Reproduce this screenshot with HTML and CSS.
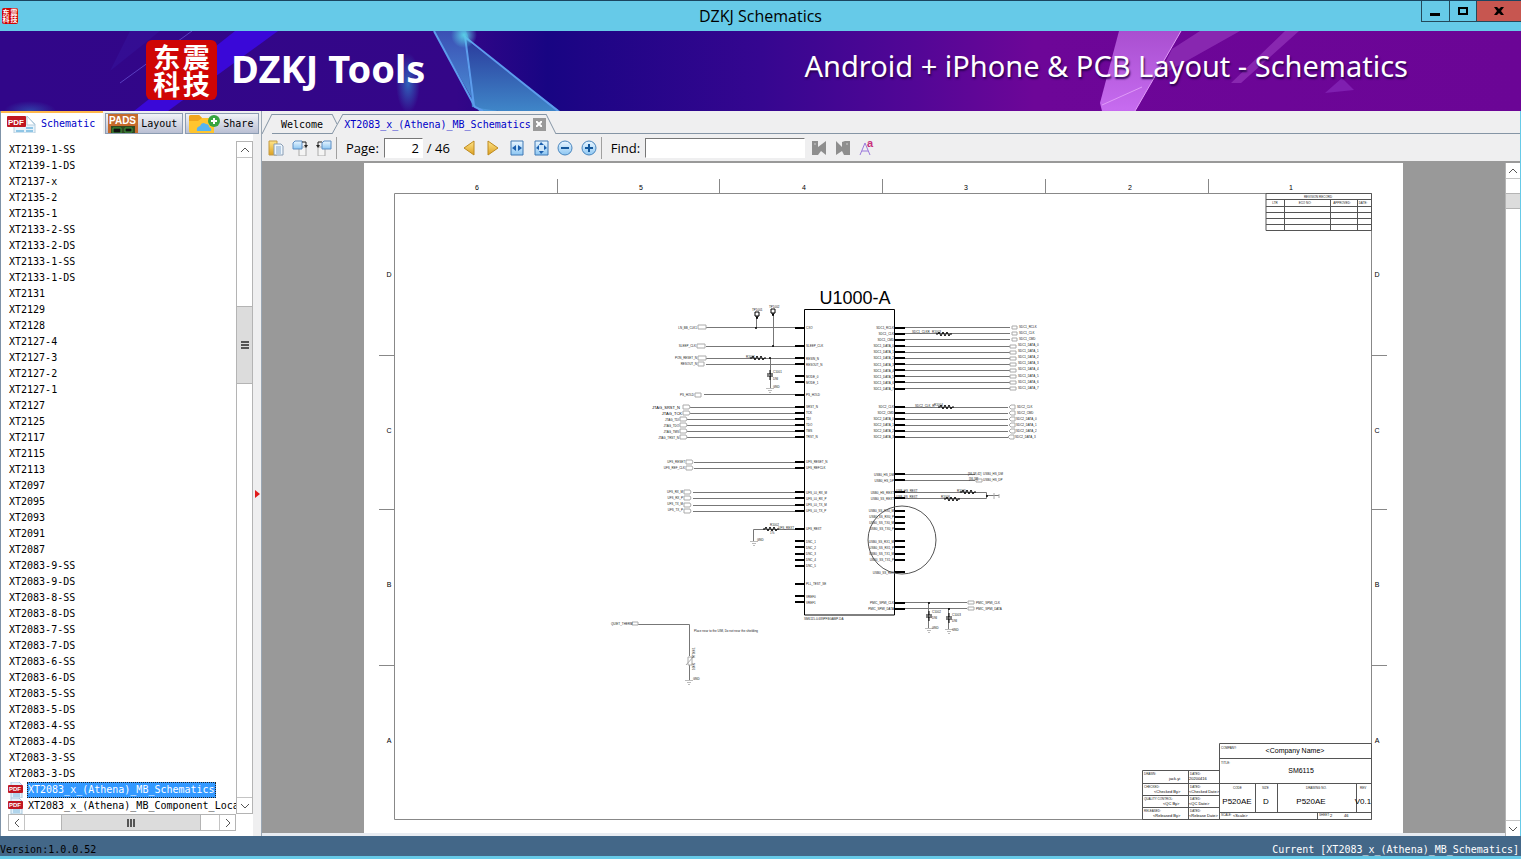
FILE: index.html
```html
<!DOCTYPE html>
<html lang="en">
<head>
    <meta charset="UTF-8">
    <title>DZKJ Schematics</title>
    <meta name="viewport" content="width=device-width, initial-scale=1">
    <link rel="stylesheet" href="styles.css">
</head>
<body>
    <!-- shared icons -->
    <svg class="defs" width="0" height="0" aria-hidden="true">
        <defs>
            <linearGradient id="gold" x1="0" y1="0" x2="0" y2="1">
                <stop offset="0" stop-color="#ffe58a"/><stop offset="1" stop-color="#dca021"/>
            </linearGradient>
            <linearGradient id="sky" x1="0" y1="0" x2="0" y2="1">
                <stop offset="0" stop-color="#eaf6ff"/><stop offset="1" stop-color="#8cc6f2"/>
            </linearGradient>
            <linearGradient id="glassA" x1="0" y1="0" x2="0" y2="1">
                <stop offset="0" stop-color="#3b4fb4"/><stop offset="1" stop-color="#4b96d8"/>
            </linearGradient>
            <linearGradient id="glassB" x1="0" y1="0" x2="0" y2="1">
                <stop offset="0" stop-color="#2a3a9c"/><stop offset="1" stop-color="#3f86c8"/>
            </linearGradient>
            <linearGradient id="pinkA" x1="0" y1="0" x2="0" y2="1">
                <stop offset="0" stop-color="#a94fd0"/><stop offset="1" stop-color="#c76cf0"/>
            </linearGradient>
            <radialGradient id="glow">
                <stop offset="0" stop-color="#5ad0e8"/><stop offset="1" stop-color="#5ad0e8" stop-opacity="0"/>
            </radialGradient>
            <radialGradient id="glowBlue">
                <stop offset="0" stop-color="#2f7cc8"/><stop offset="1" stop-color="#2f7cc8" stop-opacity="0"/>
            </radialGradient>
            <symbol id="pdf" viewBox="0 0 16 16">
                <path d="M3 0h8l3 3v13H3z" fill="#e3f1fb" stroke="#a9c8dd"/>
                <path d="M5 12h7M5 14h7" stroke="#7fb9dd"/>
                <rect x="0" y="3" width="15" height="8" rx="1" fill="#c01722"/>
                <text x="1" y="9" font-size="6" font-weight="bold" fill="#fff">PDF</text>
            </symbol>
            <symbol id="resistor" viewBox="0 0 16 4" overflow="visible">
                <path d="M0 2h2l1-2 2 4 2-4 2 4 2-4 2 4 1-2h2" fill="none" stroke="#000"/>
            </symbol>
            <symbol id="cap" viewBox="0 0 8 10" overflow="visible">
                <path d="M4 0v4M4 6v4" stroke="#000" stroke-width="1"/>
                <path d="M1 4h6M1 6h6" stroke="#000" stroke-width="1"/>
            </symbol>
            <symbol id="gnd" viewBox="0 0 8 6" overflow="visible">
                <path d="M0 .5h8M2 2.500h4M3 4.500h2" stroke="#bbb" stroke-width="1"/>
            </symbol>
        </defs>
    </svg>

    <div class="window">
        <header class="titlebar">
            <div class="app-icon"><span>东</span><span>震</span><span>科</span><span>技</span></div>
            <h1>DZKJ Schematics</h1>
            <div class="win-buttons">
                <button class="win-btn" aria-label="Minimize"><svg width="10" height="10"><path d="M0 7h10v3H0z"/></svg></button>
                <button class="win-btn" aria-label="Maximize"><svg width="10" height="10"><path d="M1 2h8v6H1z" fill="none" stroke="#000" stroke-width="2"/></svg></button>
                <button class="win-btn close" aria-label="Close"><svg width="10" height="10"><path d="M0 1h3l2 2 2-2h3L7 5l3 4H7L5 7 3 9H0l3-4z"/></svg></button>
            </div>
        </header>

        <div class="banner">
            <svg class="banner-art" viewBox="0 0 1521 80" preserveAspectRatio="none" aria-hidden="true">
                <path d="M235 0h43L168 80h-34z" fill="#3a08d8"/>
                <path d="M130 0h30L110 40z" fill="#35129a" opacity=".6"/>
                <path d="M192 0L120 52" stroke="#5a3fc0"/>
                <ellipse cx="408" cy="52" rx="12" ry="30" fill="url(#glowBlue)" opacity=".8"/>
                <ellipse cx="30" cy="80" rx="26" ry="10" fill="url(#glowBlue)" opacity=".5"/>
                <path d="M434 0h32l31 80h-18z" fill="url(#glassA)"/>
                <path d="M465 8L560 80h-62l-26-4z" fill="url(#glassB)"/>
                <path d="M434 0l41 76 8 4M465 5l9 70M465 6l93 74" fill="none" stroke="#5c9cec" stroke-width="2"/>
                <circle cx="464" cy="4" r="13" fill="url(#glow)"/>
                <path d="M1119 0h62l-46 80h-33l-2-8z" fill="url(#pinkA)"/>
                <path d="M1181 0l-46 80M1102 74l40-18" stroke="#e09af8"/>
                <path d="M1200 0h40l-82 46 14-28zM1285 0h14l-58 52h-10z" fill="#9233b8" opacity=".75"/>
                <path d="M1325 62l17-15 12 12z" fill="#7f1fb0"/>
            </svg>
            <div class="logo"><span>东</span><span>震</span><span>科</span><span>技</span></div>
            <h2 class="brand">DZKJ Tools</h2>
            <p class="tagline">Android + iPhone &amp; PCB Layout - Schematics</p>
        </div>

        <div class="main">
            <aside class="sidebar">
                <nav class="side-tabs">
                    <button class="side-tab active">
                        <svg width="30" height="19" viewBox="0 0 30 19">
                            <path d="M7 3h14l7 7v9H7z" fill="#e8f3fb" stroke="#b5cede"/><path d="M20 2l8 9h-8z" fill="#fff" stroke="#b5cede"/>
                            <path d="M19 14h7M19 17h7M9 17h8" stroke="#8fc6e6" stroke-width="2"/>
                            <rect x="0" y="2" width="19" height="11" rx="1" fill="#c01722"/>
                            <text x="1" y="11" font-size="8" font-weight="bold" fill="#fff">PDF</text>
                        </svg>
                        Schematic
                    </button>
                    <button class="side-tab">
                        <svg width="30" height="19" viewBox="0 0 30 19">
                            <rect x="0" y="0" width="30" height="19" fill="#c56a2c"/><rect x="3" y="12" width="24" height="7" fill="#2f4a22"/>
                            <text x="1" y="10" font-size="10" font-weight="bold" fill="#fff">PADS</text>
                            <path d="M5 14h8v5H5zM17 14h7v4h-7z" fill="#111" stroke="#3f9a3c"/>
                        </svg>
                        Layout
                    </button>
                    <button class="side-tab">
                        <svg width="32" height="19" viewBox="0 0 32 19">
                            <path d="M1 3q0-2 2-2h8l3 3h10q2 0 2 2v13H3q-2 0-2-2z" fill="#ffc52e"/><path d="M1 3q0-2 2-2h8l3 3-4 3H1z" fill="#f0a51c"/>
                            <path d="M9 17q-1-4 3-5 2-5 6-2 3 0 3 3 3 1 2 4z" fill="#56b4f0"/>
                            <circle cx="26" cy="7" r="6" fill="#37a540"/><path d="M26 4v6M23 7h6" stroke="#fff" stroke-width="2"/>
                        </svg>
                        Share
                    </button>
                </nav>
                <div class="side-body">
                    <div class="tree-pane">
                        <ul class="tree">
                            <li>XT2139-1-SS</li>
                            <li>XT2139-1-DS</li>
                            <li>XT2137-x</li>
                            <li>XT2135-2</li>
                            <li>XT2135-1</li>
                            <li>XT2133-2-SS</li>
                            <li>XT2133-2-DS</li>
                            <li>XT2133-1-SS</li>
                            <li>XT2133-1-DS</li>
                            <li>XT2131</li>
                            <li>XT2129</li>
                            <li>XT2128</li>
                            <li>XT2127-4</li>
                            <li>XT2127-3</li>
                            <li>XT2127-2</li>
                            <li>XT2127-1</li>
                            <li>XT2127</li>
                            <li>XT2125</li>
                            <li>XT2117</li>
                            <li>XT2115</li>
                            <li>XT2113</li>
                            <li>XT2097</li>
                            <li>XT2095</li>
                            <li>XT2093</li>
                            <li>XT2091</li>
                            <li>XT2087</li>
                            <li>XT2083-9-SS</li>
                            <li>XT2083-9-DS</li>
                            <li>XT2083-8-SS</li>
                            <li>XT2083-8-DS</li>
                            <li>XT2083-7-SS</li>
                            <li>XT2083-7-DS</li>
                            <li>XT2083-6-SS</li>
                            <li>XT2083-6-DS</li>
                            <li>XT2083-5-SS</li>
                            <li>XT2083-5-DS</li>
                            <li>XT2083-4-SS</li>
                            <li>XT2083-4-DS</li>
                            <li>XT2083-3-SS</li>
                            <li>XT2083-3-DS</li>
                            <li class="file"><svg width="16" height="16"><use href="#pdf"/></svg><span class="selected">XT2083_x_(Athena)_MB_Schematics</span></li>
                            <li class="file"><svg width="16" height="16"><use href="#pdf"/></svg><span>XT2083_x_(Athena)_MB_Component_Location</span></li>
                        </ul>
                        <div class="scroll-v">
                            <button aria-label="Scroll up"><svg width="8" height="6"><path d="M0 5l4-4 4 4"/></svg></button>
                            <div class="track">
                                <div class="before"></div>
                                <div class="thumb"><svg width="8" height="8"><path d="M0 1h8M0 4h8M0 7h8"/></svg></div>
                                <div class="after"></div>
                            </div>
                            <button aria-label="Scroll down"><svg width="8" height="6"><path d="M0 1l4 4 4-4"/></svg></button>
                        </div>
                        <div class="scroll-h">
                            <button aria-label="Scroll left"><svg width="6" height="8"><path d="M5 0L1 4l4 4"/></svg></button>
                            <div class="track">
                                <div class="before"></div>
                                <div class="thumb"><svg width="8" height="8"><path d="M1 0v8M4 0v8M7 0v8"/></svg></div>
                                <div class="after"></div>
                            </div>
                            <button aria-label="Scroll right"><svg width="6" height="8"><path d="M1 0l4 4-4 4"/></svg></button>
                        </div>
                    </div>
                    <div class="splitter"><svg width="5" height="8"><path d="M0 0l5 4-5 4z" fill="#e01b1b"/></svg></div>
                </div>
            </aside>

            <section class="viewer">
                <nav class="doc-tabs">
                    <svg class="edge" width="10" height="20"><path d="M0 20L10 0"/></svg>
                    <button class="doc-tab">Welcome</button>
                    <svg class="edge" width="11" height="20"><path d="M0 0l5 10M0 20L11 0"/></svg>
                    <button class="doc-tab active">XT2083_x_(Athena)_MB_Schematics
                        <span class="tab-close"><svg width="6" height="6"><path d="M0 0l6 6M6 0L0 6" stroke="#fff" stroke-width="2"/></svg></span>
                    </button>
                    <svg class="edge" width="10" height="20"><path d="M0 0l10 20"/></svg>
                    <span class="tab-line"></span>
                </nav>

                <div class="toolbar">
                    <button class="tool" aria-label="Pages">
                        <svg width="16" height="16"><path d="M1 1h8v14H1z" fill="url(#gold)" stroke="#c39a45"/><path d="M6 4h7l2 2v9H6z" fill="#eef6fd" stroke="#8a9eb4"/><path d="M8 7h5M8 9h5M8 11h5M8 13h5" stroke="#7fa3c9"/></svg>
                    </button>
                    <button class="tool" aria-label="Rotate right">
                        <svg width="16" height="16"><path d="M7 7h7v9H7z" fill="#f4f4f4" stroke="#aaa"/><path d="M3 1h7v8H1V3z" fill="url(#sky)" stroke="#5f8fc4"/><path d="M10 2h4v4" fill="none" stroke="#222"/><path d="M12 5h4l-2 3z" fill="#222"/></svg>
                    </button>
                    <button class="tool" aria-label="Rotate left">
                        <svg width="16" height="16"><path d="M2 7h7v9H2z" fill="#f4f4f4" stroke="#aaa"/><path d="M8 1h7v8H6V3z" fill="url(#sky)" stroke="#5f8fc4"/><path d="M6 2H2v4" fill="none" stroke="#222"/><path d="M0 5h4L2 8z" fill="#222"/></svg>
                    </button>
                    <span class="sep"></span>
                    <label for="page">Page:</label>
                    <input class="page-input" type="text" id="page" value="2">
                    <span class="total">/ 46</span>
                    <button class="tool" aria-label="Previous page">
                        <svg width="16" height="16"><path d="M13 1v14L3 8z" fill="url(#gold)" stroke="#bd8a20"/></svg>
                    </button>
                    <button class="tool" aria-label="Next page">
                        <svg width="16" height="16"><path d="M3 1v14l10-7z" fill="url(#gold)" stroke="#bd8a20"/></svg>
                    </button>
                    <button class="tool" aria-label="Fit width">
                        <svg width="16" height="16"><path d="M2 1h12v14H2z" fill="url(#sky)" stroke="#3f78b4"/><path d="M7 5v6L3 8zM9 5v6l4-3z" fill="#1b5fae"/></svg>
                    </button>
                    <button class="tool" aria-label="Fit page">
                        <svg width="16" height="16"><path d="M2 1h13v14H2z" fill="url(#sky)" stroke="#3f78b4"/><path d="M8 2l3 3H6zM8 14l3-3H6zM3 8l3-3v5zM14 8l-3-3v5z" fill="#1b5fae"/><path d="M6 5h5v6H6z" fill="#cfe6f8"/></svg>
                    </button>
                    <button class="tool" aria-label="Zoom out">
                        <svg width="16" height="16"><circle cx="8" cy="8" r="7" fill="url(#sky)" stroke="#4a86be"/><path d="M4 8h8" stroke="#14589c" stroke-width="2"/></svg>
                    </button>
                    <button class="tool" aria-label="Zoom in">
                        <svg width="16" height="16"><circle cx="8" cy="8" r="7" fill="url(#sky)" stroke="#4a86be"/><path d="M4 8h8M8 4v8" stroke="#14589c" stroke-width="2"/></svg>
                    </button>
                    <span class="sep"></span>
                    <label for="find">Find:</label>
                    <input class="find-input" type="text" id="find">
                    <button class="tool" aria-label="Find previous">
                        <svg width="16" height="16"><path d="M1 1h6v6l8-6v14l-5-4-3 4H1z" fill="#8e8e8e"/><path d="M3 4h2" stroke="#ccc"/></svg>
                    </button>
                    <button class="tool" aria-label="Find next">
                        <svg width="16" height="16"><path d="M1 1l6 6V2l3-1h5v14H9l-2-4-6 4z" fill="#8e8e8e"/><path d="M11 4h2" stroke="#ccc"/></svg>
                    </button>
                    <button class="tool" aria-label="Match case">
                        <svg width="20" height="20"><path d="M3 17L8 5l5 12M5 13h6" fill="none" stroke="#9a78dc"/><text x="10" y="9" font-size="11" font-weight="bold" fill="#c8307c">a</text></svg>
                    </button>
                </div>

                <div class="canvas">
                    <div class="page-area">
                        <svg class="page" viewBox="364 163 1039 670" role="img" aria-label="U1000-A schematic">
                            <!-- sheet frame -->
                            <g class="thin">
                                <path d="M394.500 193.500H1371.500V819.500H394.500z"/>
                                <path d="M557.500 179V193M719.500 179V193M882.500 179V193M1045.500 179V193M1208.500 179V193"/>
                                <path d="M379 355.500H394M379 509.500H394M379 665.500H394M1372 355.500H1387M1372 509.500H1387M1372 665.500H1387"/>
                            </g>
                            <g class="grid-label">
                                <text x="477" y="190">6</text><text x="641" y="190">5</text><text x="804" y="190">4</text>
                                <text x="966" y="190">3</text><text x="1130" y="190">2</text><text x="1291" y="190">1</text>
                                <text x="389" y="277">D</text><text x="389" y="433">C</text><text x="389" y="587">B</text><text x="389" y="743">A</text>
                                <text x="1377" y="277">D</text><text x="1377" y="433">C</text><text x="1377" y="587">B</text><text x="1377" y="743">A</text>
                            </g>

                            <!-- revision table -->
                            <path class="dark" d="M1266 193.500H1371.500V230.500H1266zM1266 199.500H1371M1266 206.500H1371M1266 212.500H1371M1266 218.500H1371M1266 224.500H1371M1284.500 200V230M1330.500 200V230M1357.500 200V230"/>
                            <g class="tiny mid">
                                <text x="1318" y="198">REVISION RECORD</text><text x="1275" y="204">LTR</text><text x="1305" y="204">ECO NO:</text><text x="1342" y="204">APPROVED:</text><text x="1363" y="204">DATE:</text>
                            </g>

                            <!-- chip -->
                            <path class="chip" d="M804.500 309.500H894.500V615H804.500z"/>
                            <text class="chip-name" x="855" y="304">U1000-A</text>
                            <text class="tiny" x="804" y="620">SM6115-0-689PFBGAMP-DA</text>
                            <path class="pin" d="M795 328h9M795 346h9M795 358h9M795 364h9M795 376h9M795 382h9M795 395h9M795 407h9M795 413h9M795 419h9M795 425h9M795 431h9M795 437h9M795 462h9M795 468h9M795 492h9M795 498h9M795 505h9M795 511h9M795 529h9M795 541h9M795 547h9M795 554h9M795 560h9M795 566h9M795 584h9M795 596h9M795 602h9"/>
                            <path class="pin" d="M895 328h10M895 334h10M895 340h10M895 346h10M895 352h10M895 358h10M895 364h10M895 370h10M895 376h10M895 382h10M895 389h10M895 407h10M895 413h10M895 419h10M895 425h10M895 431h10M895 437h10M895 474h10M895 480h10M895 492h10M895 498h10M895 511h10M895 517h10M895 523h10M895 529h10M895 541h10M895 547h10M895 554h10M895 560h10M895 572h10M895 603h10M895 609h10"/>
                            <g class="tiny">
                                <text x="806" y="329">CXO</text><text x="806" y="347">SLEEP_CLK</text><text x="806" y="360">RESIN_N</text><text x="806" y="366">RESOUT_N</text>
                                <text x="806" y="378">MODE_0</text><text x="806" y="384">MODE_1</text><text x="806" y="396">PS_HOLD</text><text x="806" y="408">SRST_N</text>
                                <text x="806" y="414">TCK</text><text x="806" y="420">TDI</text><text x="806" y="426">TDO</text><text x="806" y="432">TMS</text><text x="806" y="438">TRST_N</text>
                                <text x="806" y="463">UFS_RESET_N</text><text x="806" y="469">UFS_REFCLK</text><text x="806" y="494">UFS_L0_RX_M</text><text x="806" y="500">UFS_L0_RX_P</text>
                                <text x="806" y="506">UFS_L0_TX_M</text><text x="806" y="512">UFS_L0_TX_P</text><text x="806" y="530">UFS_REXT</text><text x="806" y="543">DNC_1</text>
                                <text x="806" y="549">DNC_2</text><text x="806" y="555">DNC_3</text><text x="806" y="561">DNC_4</text><text x="806" y="567">DNC_5</text>
                                <text x="806" y="585">PLL_TEST_SE</text><text x="806" y="598">VREF0</text><text x="806" y="604">VREF1</text>
                            </g>
                            <g class="tiny end">
                                <text x="894" y="329">SDC1_RCLK</text><text x="894" y="335">SDC1_CLK</text><text x="894" y="341">SDC1_CMD</text><text x="894" y="347">SDC1_DATA_0</text>
                                <text x="894" y="353">SDC1_DATA_1</text><text x="894" y="359">SDC1_DATA_2</text><text x="894" y="366">SDC1_DATA_3</text><text x="894" y="372">SDC1_DATA_4</text>
                                <text x="894" y="378">SDC1_DATA_5</text><text x="894" y="384">SDC1_DATA_6</text><text x="894" y="390">SDC1_DATA_7</text><text x="894" y="408">SDC2_CLK</text>
                                <text x="894" y="414">SDC2_CMD</text><text x="894" y="420">SDC2_DATA_0</text><text x="894" y="426">SDC2_DATA_1</text><text x="894" y="432">SDC2_DATA_2</text>
                                <text x="894" y="438">SDC2_DATA_3</text><text x="894" y="476">USB0_HS_DM</text><text x="894" y="482">USB0_HS_DP</text><text x="894" y="494">USB0_HS_REXT</text>
                                <text x="894" y="500">USB0_SS_REXT</text><text x="894" y="512">USB0_SS_RX0_M</text><text x="894" y="518">USB0_SS_RX0_P</text><text x="894" y="524">USB0_SS_TX0_M</text>
                                <text x="894" y="530">USB0_SS_TX0_P</text><text x="894" y="543">USB0_SS_RX1_M</text><text x="894" y="549">USB0_SS_RX1_P</text><text x="894" y="555">USB0_SS_TX1_M</text>
                                <text x="894" y="561">USB0_SS_TX1_P</text><text x="894" y="574">USB0_SS_REF</text><text x="894" y="604">PMIC_SPMI_CLK</text><text x="894" y="610">PMIC_SPMI_DATA</text>
                            </g>

                            <!-- left nets -->
                            <path class="wire" d="M706 327.500H795M706 346.500H795M706 358.500H795M706 364.500H795M704 394.500H795M690 407.500H795M690 413.500H795M687 419.500H795M687 425.500H795M687 431.500H795M687 437.500H795M694 462.500H795M694 468.500H795M693 492.500H795M693 498.500H795M693 505.500H795M693 511.500H795"/>
                            <path class="wire" d="M756.500 318V328M773.500 315V346M770.500 358V388M753.500 541V529.500H795"/>
                            <path class="port" d="M698 325h8v4h-8zM697 344h8v4h-8zM698 356h8v4h-8zM698 362h6v4h-6zM695 393h6v4h-6zM683 405h6l1 2-1 2h-6zM683 411h6l1 2-1 2h-6zM680 417h6l1 2-1 2h-6zM680 423h6l1 2-1 2h-6zM680 429h6l1 2-1 2h-6zM680 435h6l1 2-1 2h-6zM686 460h6l1 2-1 2h-6zM686 466h6l1 2-1 2h-6zM684 490h6l1 2-1 2h-6zM684 496h6l1 2-1 2h-6zM684 503h6l1 2-1 2h-6zM684 509h6l1 2-1 2h-6z"/>
                            <path d="M755 312h4v4h-4zM756 316l1 3 1-3M771 309h4v4h-4zM772 313l1 3 1-3" fill="#fff" stroke="#000"/>
                            <circle cx="756" cy="328" r="1"/><circle cx="773" cy="346" r="1"/><circle cx="770" cy="358" r="1"/>
                            <use href="#resistor" x="750" y="356" width="16" height="4"/>
                            <use href="#resistor" x="763" y="527" width="16" height="4"/>
                            <use href="#cap" x="766" y="370" width="8" height="10"/>
                            <use href="#gnd" x="766" y="388" width="8" height="6"/>
                            <use href="#gnd" x="750" y="541" width="8" height="6"/>
                            <g class="tiny end">
                                <text x="697" y="329">LN_BB_CLK1</text><text x="696" y="347">SLEEP_CLK</text><text x="697" y="359">PON_RESET_N</text><text x="697" y="365">RESOUT_N</text><text x="694" y="396">PS_HOLD</text>
                                <text x="679" y="421">JTAG_TDI</text><text x="679" y="427">JTAG_TDO</text><text x="679" y="433">JTAG_TMS</text><text x="679" y="439">JTAG_TRST_N</text>
                                <text x="685" y="463">UFS_RESET</text><text x="685" y="469">UFS_REF_CLK</text><text x="683" y="493">UFS_RX_M</text><text x="683" y="499">UFS_RX_P</text><text x="683" y="505">UFS_TX_M</text><text x="683" y="511">UFS_TX_P</text>
                                <text x="794" y="529">UFS_REXT</text>
                            </g>
                            <g class="small end"><text x="680" y="409">JTAG_SRST_N</text><text x="682" y="415">JTAG_TCK</text></g>
                            <g class="tiny">
                                <text x="752" y="311">TP1001</text><text x="769" y="308">TP1002</text><text x="746" y="358">R1001</text><text x="773" y="373">C1001</text><text x="773" y="380">DNI</text><text x="773" y="388">GND</text>
                                <text x="770" y="526">R1002</text><text x="770" y="534">1%</text><text x="757" y="541">GND</text>
                            </g>

                            <!-- right nets -->
                            <path class="wire" d="M905 327.500H1010M905 333.500H1010M905 339.500H1010M905 346.500H1010M905 352.500H1010M905 358.500H1010M905 364.500H1010M905 370.500H1010M905 376.500H1010M905 382.500H1010M905 388.500H1010M905 407.500H1008M905 413.500H1008M905 419.500H1008M905 425.500H1008M905 431.500H1008M905 437.500H1008"/>
                            <path class="wire" d="M905 474.500H975M905 480.500H975M905 492.500H986.500V498.500H905M986 495.500H999M905 602.500H967M905 608.500H967M928.500 603V628M948.500 609V629"/>
                            <path class="port" d="M1012 326h5v3h-5zM1012 332h5v3h-5zM1012 338h5v3h-5zM1010 345h6v3h-6zM1010 351h6v3h-6zM1010 357h6v3h-6zM1010 363h6v3h-6zM1010 369h6v3h-6zM1010 375h6v3h-6zM1010 381h6v3h-6zM1010 387h6v3h-6zM1009 407l2-2h4v4h-4zM1009 413l2-2h4v4h-4zM1009 419l2-2h4v4h-4zM1009 425l2-2h4v4h-4zM1009 431l2-2h4v4h-4zM1008 437l2-2h4v4h-4zM976 479h6v3h-6zM968 601h6v3h-6zM968 607h6v3h-6zM994 493v6M999 494v4"/>
                            <use href="#resistor" x="936" y="332" width="16" height="4"/>
                            <use href="#resistor" x="938" y="405" width="16" height="4"/>
                            <use href="#resistor" x="960" y="490" width="16" height="4"/>
                            <use href="#resistor" x="944" y="497" width="16" height="4"/>
                            <use href="#cap" x="925" y="611" width="8" height="10"/>
                            <use href="#cap" x="945" y="613" width="8" height="10"/>
                            <use href="#gnd" x="925" y="628" width="8" height="6"/>
                            <use href="#gnd" x="945" y="629" width="8" height="6"/>
                            <circle cx="929" cy="603" r="1"/><circle cx="949" cy="609" r="1"/><circle cx="987" cy="496" r="1"/>
                            <circle class="dark" cx="902" cy="540" r="34"/>
                            <g class="tiny">
                                <text x="1019" y="328">SDC1_RCLK</text><text x="1019" y="334">SDC1_CLK</text><text x="1019" y="340">SDC1_CMD</text><text x="1018" y="346">SDC1_DATA_0</text>
                                <text x="1018" y="352">SDC1_DATA_1</text><text x="1018" y="358">SDC1_DATA_2</text><text x="1018" y="364">SDC1_DATA_3</text><text x="1018" y="370">SDC1_DATA_4</text>
                                <text x="1018" y="377">SDC1_DATA_5</text><text x="1018" y="383">SDC1_DATA_6</text><text x="1018" y="389">SDC1_DATA_7</text><text x="1017" y="408">SDC2_CLK</text>
                                <text x="1017" y="414">SDC2_CMD</text><text x="1016" y="420">SDC2_DATA_0</text><text x="1016" y="426">SDC2_DATA_1</text><text x="1016" y="432">SDC2_DATA_2</text>
                                <text x="1015" y="438">SDC2_DATA_3</text><text x="983" y="475">USB0_HS_DM</text><text x="983" y="481">USB0_HS_DP</text><text x="976" y="604">PMIC_SPMI_CLK</text>
                                <text x="976" y="610">PMIC_SPMI_DATA</text><text x="912" y="333">SDC1_CLKR</text><text x="932" y="333">R1003</text><text x="915" y="407">SDC2_CLK_R</text>
                                <text x="934" y="406">R1004</text><text x="896" y="492">USB_HS_REXT</text><text x="896" y="498">USB_SS_REXT</text><text x="957" y="492">R1005</text><text x="941" y="498">R1006</text>
                                <text x="968" y="475">[36,38,42]</text><text x="969" y="480">[36,38]</text><text x="932" y="613">C1002</text><text x="932" y="619">DNI</text><text x="932" y="629">GND</text>
                                <text x="952" y="616">C1003</text><text x="952" y="622">DNI</text><text x="952" y="631">GND</text>
                            </g>

                            <!-- thermistor -->
                            <path class="wire" d="M638 624.500H689.500V656M689.500 665V680"/>
                            <path class="port" d="M632 622h6v3h-6zM688 657h4v8h-4zM686 665l8-9"/>
                            <use href="#gnd" x="685" y="680" width="8" height="6"/>
                            <g class="tiny">
                                <text x="611" y="625">QUIET_THERM</text><text x="694" y="632">Place near to the UIM, Do not near the shielding</text><text x="693" y="680">GND</text>
                                <text transform="translate(695 658) rotate(-90)">RT1001</text><text transform="translate(695 670) rotate(-90)">100K</text>
                            </g>

                            <!-- title block -->
                            <path class="dark" d="M1219.500 743.500H1371.500V819.500H1219.500zM1220 758.500H1371M1220 783.500H1371M1220 812.500H1371M1255.500 783V812M1277.500 783V812M1356.500 783V812M1317.500 812V819"/>
                            <path class="dark" d="M1219.500 770.500H1142.500V819.500H1219.500M1143 783.500H1219M1143 795.500H1219M1143 807.500H1219M1188.500 771V819"/>
                            <g class="tiny">
                                <text x="1221" y="749">COMPANY:</text><text x="1221" y="764">TITLE:</text><text x="1233" y="789">CODE</text><text x="1262" y="789">SIZE</text><text x="1306" y="789">DRAWING NO.</text><text x="1360" y="789">REV</text>
                                <text x="1221" y="816">SCALE:</text><text x="1319" y="816">SHEET:</text><text x="1144" y="775">DRAWN:</text><text x="1190" y="775">DATED:</text><text x="1144" y="788">CHECKED:</text><text x="1190" y="788">DATED:</text>
                                <text x="1144" y="800">QUALITY CONTROL:</text><text x="1190" y="800">DATED:</text><text x="1144" y="812">RELEASED:</text><text x="1190" y="812">DATED:</text>
                            </g>
                            <g class="small">
                                <text x="1169" y="780">jack.yi</text><text x="1189" y="780">20200416</text><text x="1154" y="793">&lt;Checked By&gt;</text><text x="1189" y="793">&lt;Checked Date&gt;</text>
                                <text x="1163" y="805">&lt;QC By&gt;</text><text x="1189" y="805">&lt;QC Date&gt;</text><text x="1153" y="817">&lt;Released By&gt;</text><text x="1189" y="817">&lt;Release Date&gt;</text>
                                <text x="1233" y="817">&lt;Scale&gt;</text><text x="1330" y="817">2</text><text x="1344" y="817">46</text>
                            </g>
                            <g class="medium"><text x="1295" y="753">&lt;Company Name&gt;</text><text x="1301" y="773">SM6115</text></g>
                            <g class="large"><text x="1237" y="804">P520AE</text><text x="1266" y="804">D</text><text x="1311" y="804">P520AE</text><text x="1363" y="804">V0.1</text></g>
                        </svg>
                    </div>
                    <div class="scroll-v page-scroll">
                        <button aria-label="Previous screen"><svg width="8" height="6"><path d="M0 5l4-4 4 4"/></svg></button>
                        <div class="track">
                            <div class="before"></div>
                            <div class="thumb"></div>
                            <div class="after"></div>
                        </div>
                        <button aria-label="Next screen"><svg width="8" height="6"><path d="M0 1l4 4 4-4"/></svg></button>
                    </div>
                </div>
            </section>
        </div>

        <footer class="statusbar">
            <span>Version:1.0.0.52</span>
            <span class="current">Current [XT2083_x_(Athena)_MB_Schematics]</span>
        </footer>
    </div>
</body>
</html>
```
FILE: styles.css
```css
* {
    box-sizing: border-box;
}
body {
    margin: 0;
    font-family: "DejaVu Sans Mono", "Liberation Mono", monospace;
    font-size: 10px;
    color: #000;
}
button {
    font: inherit;
    color: inherit;
    padding: 0;
    border: none;
    background: none;
    display: flex;
    align-items: center;
    justify-content: center;
}
svg {
    display: block;
    flex: none;
}
svg text {
    font-family: "Liberation Sans", Arial, sans-serif;
}
.defs {
    position: absolute;
}
.window {
    height: 100vh;
    display: flex;
    flex-direction: column;
    background: #efeff0;
    border-bottom: 3px solid #66cae8;
    overflow: hidden;
}

/* Title bar */
.titlebar {
    flex: none;
    height: 31px;
    display: grid;
    grid-template-columns: 100px 1fr 100px;
    align-items: center;
    background: #66cae8;
    border-top: 1px solid #1a4560;
}
.titlebar h1 {
    margin: 0;
    text-align: center;
    font-family: "Open Sans", "Noto Sans", sans-serif;
    font-size: 16px;
    line-height: 28px;
    font-weight: normal;
}
.app-icon, .logo {
    display: grid;
    grid-template-columns: 1fr 1fr;
    align-content: center;
    justify-items: center;
    background: #cf0505;
    color: #fff;
    font-family: "Noto Sans CJK SC", sans-serif;
    font-weight: bold;
}
.app-icon {
    width: 16px;
    height: 16px;
    margin-left: 2px;
    border-radius: 2px;
    font-size: 7px;
    line-height: 7px;
}
.win-buttons {
    display: flex;
    align-self: start;
    justify-content: flex-end;
}
.win-btn {
    width: 28px;
    height: 21px;
    border: 1px solid #24485a;
    border-top: none;
    border-right: none;
}
.win-btn.close {
    width: 45px;
    background: #c75650;
}

/* Banner */
.banner {
    flex: none;
    position: relative;
    height: 80px;
    display: flex;
    align-items: center;
    padding: 0 113px 2px 146px;
    color: #fff;
    background: linear-gradient(90deg, #310689 0%, #340688 30%, #180583 36%, #1d0585 38%, #350690 50%, #520696 60%, #6d0698 68%, #6b0596 100%);
    font-family: "Noto Sans", "Open Sans", sans-serif;
}
.banner-art {
    position: absolute;
    inset: 0;
    width: 100%;
    height: 100%;
}
.logo {
    position: relative;
    width: 71px;
    height: 60px;
    margin-right: 14px;
    padding: 0 6px;
    border-radius: 6px;
    font-size: 27px;
    line-height: 27px;
}
.brand {
    position: relative;
    margin: 0 0 4px;
    font-size: 38px;
    line-height: 40px;
    font-weight: bold;
}
.tagline {
    position: relative;
    margin: 0 0 8px auto;
    font-size: 29px;
    line-height: 40px;
    white-space: nowrap;
    text-shadow: 1px 2px 2px #2a0350;
}

/* Main area */
.main {
    flex: 1;
    min-height: 0;
    display: flex;
    border-right: 1px solid #66cae8;
}
.sidebar {
    flex: none;
    width: 261px;
    display: flex;
    flex-direction: column;
    border-left: 1px solid #7f93a8;
}
.side-tabs {
    flex: none;
    display: flex;
    align-items: flex-end;
    gap: 2px;
    height: 23px;
}
.side-tab {
    height: 21px;
    gap: 3px;
    padding: 0 5px 0 2px;
    background: linear-gradient(#f2f3f7, #b9bfd3);
    border: 1px solid #8c9cb2;
}
.side-tab.active {
    height: 23px;
    gap: 4px;
    padding: 0 8px 0 6px;
    background: #fff;
    border: none;
    border-top: 2px solid #ffb74a;
    color: #0000c8;
}
.side-body {
    flex: 1;
    min-height: 0;
    display: flex;
    background: #fff;
}
.tree-pane {
    flex: 1;
    min-width: 0;
    display: grid;
    grid-template-columns: 1fr 17px;
    grid-template-rows: 1fr 17px;
    padding: 7px 0 5px 7px;
}
.tree {
    margin: 0;
    padding: 1px 0 0;
    min-width: 0;
    overflow: hidden;
    list-style: none;
    line-height: 16px;
    white-space: nowrap;
}
.tree li {
    height: 16px;
    padding-left: 1px;
}
.tree .file {
    display: flex;
    gap: 3px;
    padding-left: 0;
}
.tree .file span {
    padding: 0 1px;
}
.tree .file .selected {
    background: #3399ff;
    color: #fff;
    outline: 1px dotted #222;
    outline-offset: -1px;
}
.splitter {
    flex: none;
    width: 8px;
    display: flex;
    align-items: center;
    justify-content: center;
    padding-top: 18px;
    background: #efeff0;
}

/* Scroll bars */
.scroll-v, .scroll-h {
    display: flex;
    background: #fff;
    border: 1px solid #b4b4b4;
}
.scroll-v {
    flex-direction: column;
}
.scroll-v path, .scroll-h path {
    fill: none;
    stroke: #555;
    stroke-width: 1px;
}
.scroll-v button {
    height: 16px;
    border-bottom: 1px solid #c4c4c4;
}
.scroll-v button:last-child {
    border-bottom: none;
    border-top: 1px solid #c4c4c4;
}
.scroll-h button {
    width: 16px;
    border-right: 1px solid #c4c4c4;
}
.scroll-h button:last-child {
    border-right: none;
    border-left: 1px solid #c4c4c4;
}
.track {
    flex: 1;
    display: flex;
    flex-direction: inherit;
}
.thumb {
    display: flex;
    align-items: center;
    justify-content: center;
    background: #dcdcdc;
    border: 1px solid #b4b4b4;
}
.scroll-v .thumb {
    height: 78px;
    border-width: 1px 0;
}
.scroll-h .thumb {
    width: 140px;
    border-width: 0 1px;
}
.scroll-v .thumb path, .scroll-h .thumb path {
    stroke-width: 2px;
}
.scroll-v .before {
    flex: 148;
}
.scroll-v .after {
    flex: 414;
}
.scroll-h .before {
    flex: 37;
}
.scroll-h .after {
    flex: 19;
}
.page-scroll {
    flex: none;
    width: 15px;
    border-width: 0 0 0 1px;
}
.page-scroll .thumb {
    height: 16px;
}
.page-scroll .before {
    flex: 14;
}
.page-scroll .after {
    flex: 620;
}

/* Document tabs */
.viewer {
    flex: 1;
    min-width: 0;
    display: flex;
    flex-direction: column;
    border-left: 1px solid #9aa7b4;
}
.doc-tabs {
    flex: none;
    height: 23px;
    display: flex;
    align-items: flex-end;
}
.doc-tab {
    height: 20px;
    padding: 0 9px;
    border-top: 1px solid #8595a5;
    border-bottom: 1px solid #8595a5;
}
.doc-tab.active {
    padding: 0 0 0 1px;
    gap: 2px;
    border-bottom-color: transparent;
    color: #0000c8;
    white-space: nowrap;
}
.edge path {
    fill: none;
    stroke: #8595a5;
}
.tab-close {
    width: 13px;
    height: 13px;
    display: flex;
    align-items: center;
    justify-content: center;
    background: #999;
}
.tab-line {
    flex: 1;
    border-bottom: 1px solid #8595a5;
}

/* Toolbar */
.toolbar {
    flex: none;
    height: 29px;
    display: flex;
    align-items: center;
    padding-left: 2px;
    border-bottom: 2px solid #999;
    font-family: "Open Sans", "Noto Sans", sans-serif;
    font-size: 13px;
}
.tool {
    width: 24px;
    height: 24px;
}
.sep {
    width: 1px;
    height: 22px;
    margin-right: 9px;
    background: #a0a0a0;
}
.toolbar input {
    height: 20px;
    font: inherit;
    border: 1px solid #fff;
    border-top-color: #777;
    border-left-color: #777;
    background: #fff;
    outline: none;
}
.page-input {
    width: 39px;
    margin: 0 4px 0 5px;
    padding: 0 3px;
    text-align: right;
}
.total {
    margin-right: 7px;
}
.find-input {
    width: 160px;
    margin: 0 2px 0 5px;
}

/* Page canvas */
.canvas {
    flex: 1;
    min-height: 0;
    display: flex;
}
.page-area {
    flex: 1;
    min-width: 0;
    display: flex;
    justify-content: center;
    background: #999;
    border-bottom: 3px solid #e8ecf2;
}
.page {
    flex: 0 1 auto;
    height: 100%;
    max-width: 100%;
    background: #fff;
}
.page .thin, .page .dark, .page .wire, .page .port {
    fill: none;
    stroke: #888;
}
.page .dark {
    stroke: #555;
}
.page .wire {
    stroke: #777;
}
.page .port {
    stroke: #aaa;
}
.page .pin, .page .chip {
    fill: none;
    stroke: #000;
}
.page .pin {
    stroke-width: 2px;
}
.page .chip-name {
    font-size: 18px;
    text-anchor: middle;
}
.tiny {
    font-size: 3px;
    fill: #222;
}
.small {
    font-size: 4px;
}
.medium {
    font-size: 7px;
    text-anchor: middle;
}
.large {
    font-size: 8px;
    text-anchor: middle;
}
.grid-label {
    font-size: 7px;
    text-anchor: middle;
}
.mid {
    text-anchor: middle;
}
.end {
    text-anchor: end;
}

/* Status bar */
.statusbar {
    flex: none;
    height: 20px;
    display: flex;
    align-items: flex-end;
    justify-content: space-between;
    padding: 0 2px 1px 0;
    background: #436788;
}
.current {
    color: #fff;
}
```
